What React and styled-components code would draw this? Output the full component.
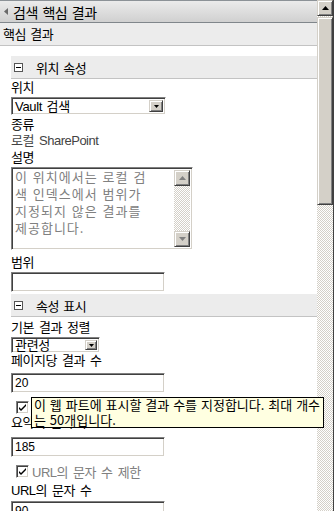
import React from "react";
import styled, { createGlobalStyle } from "styled-components";

const GlobalStyle = createGlobalStyle`
  html, body {
    margin: 0;
    padding: 0;
    background: #fff;
  }
  body {
    font-family: "Liberation Sans", "Noto Sans CJK KR", sans-serif;
    font-size: 12px;
    color: #000;
  }
`;

const Page = styled.div`
  position: relative;
  display: flex;
  width: 336px;
  height: 511px;
  overflow: hidden;
  background: #fff;
`;

const Main = styled.div`
  width: 317px;
  flex: none;
`;

const TitleBar = styled.div`
  height: 21px;
  display: flex;
  align-items: center;
  gap: 5px;
  padding-left: 4px;
  border-top: 1px solid #8c9297;
  border-bottom: 1px solid #80868b;
  background: linear-gradient(#ebebeb, #d0d0d0);
  font-family: "Noto Sans CJK KR", sans-serif;
  font-size: 14px;
  letter-spacing: -0.5px;
  word-spacing: 2px;
`;

const SubHeader = styled.div`
  height: 22px;
  line-height: 22px;
  padding-left: 3px;
  background: #ececec;
  border-bottom: 1px solid #c3c3c3;
  font-family: "Noto Sans CJK KR", sans-serif;
  font-size: 13px;
  letter-spacing: -0.5px;
  word-spacing: 2px;
`;

const Panel = styled.div`
  margin-top: 10px;
  padding-left: 11px;
`;

const SectionHeader = styled.div`
  height: 22px;
  display: flex;
  align-items: center;
  gap: 13px;
  padding-left: 3px;
  margin-top: ${({ $mt }) => $mt || 0}px;
  background: #ececec;
  border-bottom: 1px solid #c3c3c3;
  font-family: "Noto Sans CJK KR", sans-serif;
  font-size: 13px;
  letter-spacing: -0.5px;
  word-spacing: 2px;
`;

const MinusBox = styled.span`
  width: 7px;
  height: 7px;
  border: 1px solid #555;
  background: #fff;
  display: flex;
  align-items: center;
  justify-content: center;
  &::after {
    content: "";
    width: 5px;
    height: 1px;
    background: #000;
  }
`;

const Label = styled.div`
  height: 16px;
  line-height: 16px;
  margin-top: ${({ $mt }) => $mt || 0}px;
  color: ${({ $muted }) => ($muted ? "#444" : "#000")};
  font-size: 13px;
  letter-spacing: -0.5px;
  word-spacing: 2px;
  white-space: nowrap;
`;

const sunken = `
  box-sizing: border-box;
  border: 1px solid;
  border-color: #808080 #ffffff #ffffff #808080;
  box-shadow: inset 1px 1px #404040, inset -1px -1px #d4d0c8;
  background: #fff;
`;

const TextInput = styled.div`
  ${sunken}
  width: 154px;
  height: 20px;
  margin-top: ${({ $mt }) => $mt || 0}px;
  padding: 0 3px;
  line-height: 18px;
`;

const Select = styled.div`
  ${sunken}
  width: ${({ $w }) => $w}px;
  height: ${({ $h }) => $h}px;
  margin-top: ${({ $mt }) => $mt || 0}px;
  display: flex;
  align-items: stretch;
  padding: 2px;
`;

const SelectText = styled.span`
  flex: 1;
  padding-left: 1px;
  line-height: ${({ $h }) => $h - 4}px;
  font-size: 13px;
  letter-spacing: -0.3px;
  word-spacing: 1px;
  white-space: nowrap;
`;

const ArrowButton = styled.span`
  box-sizing: border-box;
  width: ${({ $size }) => $size}px;
  flex: none;
  display: flex;
  align-items: center;
  justify-content: center;
  background: #d4d0c8;
  border: 1px solid;
  border-color: #d4d0c8 #404040 #404040 #d4d0c8;
  box-shadow: inset 1px 1px #fff, inset -1px -1px #808080;
`;

const TextArea = styled.div`
  ${sunken}
  width: 182px;
  height: 83px;
  margin-top: 1px;
  display: flex;
  padding: 2px;
`;

const AreaText = styled.div`
  flex: 1;
  margin-top: -2px;
  padding-left: 1px;
  color: #808080;
  font-family: "Noto Sans CJK KR", monospace;
  font-size: 13px;
  line-height: 17px;
  letter-spacing: 1px;
  word-spacing: 1px;
  white-space: nowrap;
`;

const Track = styled.div`
  width: 16px;
  flex: none;
  display: flex;
  flex-direction: column;
  background: repeating-conic-gradient(#d4d0c8 0 25%, #ffffff 0 50%) 0 0 / 2px 2px;
`;

const ScrollButton = styled.div`
  box-sizing: border-box;
  height: 16px;
  flex: none;
  display: flex;
  align-items: center;
  justify-content: center;
  background: #d4d0c8;
  border: 1px solid;
  border-color: #d4d0c8 #404040 #404040 #d4d0c8;
  box-shadow: inset 1px 1px #fff, inset -1px -1px #808080;
`;

const Thumb = styled.div`
  box-sizing: border-box;
  height: 188px;
  margin-top: 1px;
  background: #d4d0c8;
  border: 1px solid;
  border-color: #d4d0c8 #404040 #404040 #d4d0c8;
  box-shadow: inset 1px 1px #fff, inset -1px -1px #808080;
`;

const Spacer = styled.div`
  flex: 1;
`;

const PageScroll = styled(Track)`
  border-right: 1px solid #404040;
`;

const Edge = styled.div`
  width: 2px;
  flex: none;
  background: #fff;
`;

const CheckRow = styled.div`
  height: 16px;
  display: flex;
  align-items: center;
  gap: 3px;
  margin-top: ${({ $mt }) => $mt || 0}px;
  padding-left: 5px;
  color: ${({ $muted }) => ($muted ? "#808080" : "#000")};
  font-size: 13px;
  letter-spacing: -0.5px;
  word-spacing: 2px;
`;

const CheckBox = styled.span`
  ${sunken}
  width: 13px;
  height: 13px;
  flex: none;
  display: flex;
  align-items: center;
  justify-content: center;
`;

const Tooltip = styled.div`
  position: absolute;
  left: 31px;
  top: 397px;
  box-sizing: border-box;
  width: 293px;
  height: 31px;
  padding: 0 2px;
  background: #ffffe1;
  border: 1px solid #000;
  font-family: "Noto Sans CJK KR", sans-serif;
  font-size: 13px;
  line-height: 14.5px;
  word-spacing: 1px;
  white-space: nowrap;
`;

const Down = ({ color = "#000" }) => (
  <svg width="7" height="4" viewBox="0 0 7 4">
    <path d="M0 0h7L3.5 4z" fill={color} />
  </svg>
);

const Up = ({ color = "#000" }) => (
  <svg width="7" height="4" viewBox="0 0 7 4">
    <path d="M0 4h7L3.5 0z" fill={color} />
  </svg>
);

const Check = () => (
  <svg width="7" height="7" viewBox="0 0 7 7">
    <path d="M0 3l2 2 5-5v2L2 7 0 5z" fill="#000" />
  </svg>
);

const SelectBox = ({ text, w, h, mt }) => (
  <Select $w={w} $h={h} $mt={mt}>
    <SelectText $h={h}>{text}</SelectText>
    <ArrowButton $size={h - 4}>
      <svg width="5" height="3" viewBox="0 0 5 3">
        <path d="M0 0h5L2.5 3z" fill="#000" />
      </svg>
    </ArrowButton>
  </Select>
);

export default function App() {
  return (
    <>
      <GlobalStyle />
      <Page>
        <Main>
          <TitleBar>
            <svg width="4" height="7" viewBox="0 0 4 7">
              <path d="M4 0v7L0 3.5z" fill="#6a6a6a" />
            </svg>
            검색 핵심 결과
          </TitleBar>
          <SubHeader>핵심 결과</SubHeader>
          <Panel>
            <SectionHeader>
              <MinusBox />
              위치 속성
            </SectionHeader>
            <Label $mt={1}>위치</Label>
            <SelectBox text="Vault 검색" w={155} h={18} mt={1} />
            <Label $mt={2}>종류</Label>
            <Label $muted>로컬 SharePoint</Label>
            <Label $mt={1}>설명</Label>
            <TextArea>
              <AreaText>
                이 위치에서는 로컬 검<br />
                색 인덱스에서 범위가<br />
                지정되지 않은 결과를<br />
                제공합니다.
              </AreaText>
              <Track>
                <ScrollButton>
                  <Up color="#808080" />
                </ScrollButton>
                <Spacer />
                <ScrollButton>
                  <Down color="#808080" />
                </ScrollButton>
              </Track>
            </TextArea>
            <Label $mt={5}>범위</Label>
            <TextInput $mt={1} />
            <SectionHeader $mt={2}>
              <MinusBox />
              속성 표시
            </SectionHeader>
            <Label $mt={3}>기본 결과 정렬</Label>
            <SelectBox text="관련성" w={89} h={16} mt={1} />
            <Label>페이지당 결과 수</Label>
            <TextInput $mt={4}>20</TextInput>
            <CheckRow $mt={6}>
              <CheckBox>
                <Check />
              </CheckBox>
            </CheckRow>
            <Label>요약의 문자 수</Label>
            <TextInput $mt={6}>185</TextInput>
            <CheckRow $mt={6} $muted>
              <CheckBox>
                <Check />
              </CheckBox>
              URL의 문자 수 제한
            </CheckRow>
            <Label $mt={4}>URL의 문자 수</Label>
            <TextInput $mt={2}>90</TextInput>
          </Panel>
        </Main>
        <PageScroll>
          <ScrollButton>
            <Up />
          </ScrollButton>
          <Thumb />
          <Spacer />
        </PageScroll>
        <Edge />
        <Tooltip>
          이 웹 파트에 표시할 결과 수를 지정합니다. 최대 개수
          <br />는 50개입니다.
        </Tooltip>
      </Page>
    </>
  );
}
